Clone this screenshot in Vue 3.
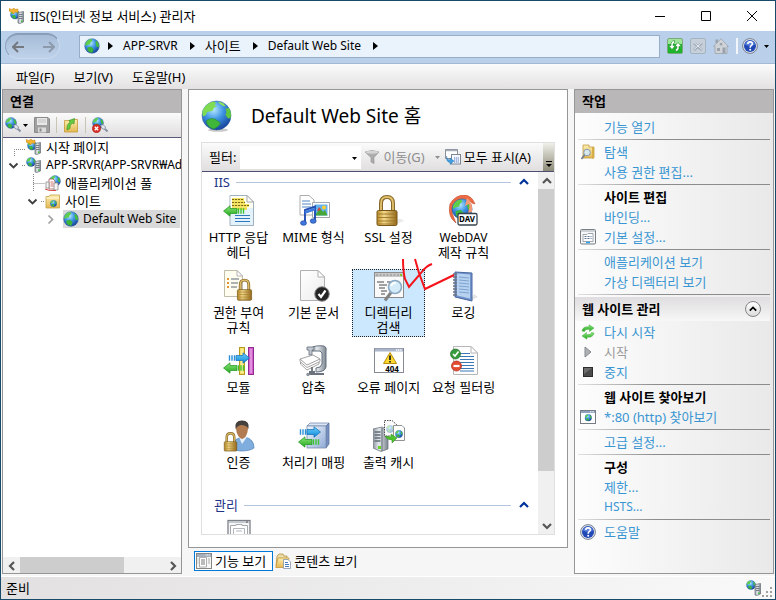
<template>
  <div class="window">
    <!-- Icon sprite -->
    <svg class="sprite" aria-hidden="true">
      <defs>
        <radialGradient id="gBall" cx="0.4" cy="0.3" r="0.75">
          <stop offset="0" stop-color="#b5e8ff" />
          <stop offset="0.45" stop-color="#3f95e4" />
          <stop offset="1" stop-color="#123a94" />
        </radialGradient>
        <linearGradient id="gGold" x1="0" x2="1">
          <stop offset="0" stop-color="#b88a26" />
          <stop offset="0.35" stop-color="#f4db8c" />
          <stop offset="1" stop-color="#94691a" />
        </linearGradient>
        <linearGradient id="gSteel" x1="0" x2="1">
          <stop offset="0" stop-color="#8f979f" />
          <stop offset="0.4" stop-color="#e6eaee" />
          <stop offset="1" stop-color="#7b848d" />
        </linearGradient>
        <linearGradient id="gPage" x1="0" y1="0" x2="1" y2="1">
          <stop offset="0" stop-color="#ffffff" />
          <stop offset="1" stop-color="#ececec" />
        </linearGradient>
        <linearGradient id="gFolder" x1="0" y1="0" x2="0" y2="1">
          <stop offset="0" stop-color="#fdeeb0" />
          <stop offset="1" stop-color="#e3b954" />
        </linearGradient>
        <linearGradient id="gGreen" x1="0" y1="0" x2="0" y2="1">
          <stop offset="0" stop-color="#8ce67c" />
          <stop offset="1" stop-color="#22a81c" />
        </linearGradient>
        <linearGradient id="gBlue" x1="0" y1="0" x2="0" y2="1">
          <stop offset="0" stop-color="#6fd0fb" />
          <stop offset="1" stop-color="#0b86d8" />
        </linearGradient>
        <linearGradient id="gBox" x1="0" y1="0" x2="1" y2="1">
          <stop offset="0" stop-color="#f2f7fd" />
          <stop offset="1" stop-color="#8ea9d6" />
        </linearGradient>
      </defs>

      <symbol id="globe" viewBox="0 0 16 16">
        <circle cx="8" cy="8" r="7.3" fill="url(#gBall)" stroke="#2b5e9c" stroke-width=".5" />
        <path d="M2 4.500Q4 1.200 7.500 1L8.300 2.800L6.500 4.200L6 6.200L3.600 6.800L1.400 8Q1 6 2 4.500Z" fill="#5fce4a" />
        <path d="M3.500 9.500L7 8.800L9.600 11L8.500 14.600Q5.500 15 3.500 12.500Z" fill="#3db53b" />
        <path d="M11.500 3L13.500 3.500Q15.500 6.500 14.700 9.500L12.500 8.500L11.800 6Z" fill="#46bd3e" />
      </symbol>
      <symbol id="globe-large" viewBox="0 0 32 32">
        <ellipse cx="17" cy="30" rx="10" ry="1.800" fill="#c9c9c9" />
        <circle cx="15.500" cy="15.500" r="14.500" fill="url(#gBall)" stroke="#2b5e9c" stroke-width=".5" />
        <path d="M2.500 9Q6 2.500 13 1.500L15 3L13.500 5L15.500 6.500L12.500 8L12 10.500L8.500 11.500L6 12L5 15L2 16.500Q.5 12 2.500 9Z" fill="#7fdc52" />
        <path d="M5.500 20.500L9.500 18.500L14 19L19.500 23L17.500 26L13 29Q8 28 6 24Z" fill="#3fb63a" stroke="#2a8a39" stroke-width=".6" />
        <path d="M17 1.500L22 3L25 6.500L22 6L19 4Z" fill="#8fe05c" />
        <path d="M24.500 8.500L28 8Q31 13 29.500 18L27 18.500L24.500 15L25.500 12Z" fill="#5fc644" />
      </symbol>
      <symbol id="server" viewBox="0 0 16 16">
        <path d="M9 4.500L14.500 3.500V14L11 15.500L9 15Z" fill="url(#gSteel)" stroke="#68717a" stroke-width=".7" />
        <path d="M10 6.500H13.500M10 8.500H13.500M10 10.500H13.500" stroke="#5f6870" stroke-width=".8" />
        <rect x="12" y="12.500" width="1.500" height="1.500" fill="#39c934" />
      </symbol>
      <symbol id="web-server" viewBox="0 0 16 16">
        <use href="#globe" x="0" y="0" width="10" height="10" />
        <use href="#server" width="16" height="16" />
      </symbol>
      <symbol id="start-page" viewBox="0 0 16 16">
        <use href="#globe" x="1" y="1" width="10" height="11" />
        <path d="M0 3V.5L3 1.500L5 0L6 1.500L9 1V4.500L6 4L4.500 6L3.500 4.500Z" fill="#f5b52e" stroke="#c77e12" stroke-width=".5" />
        <use href="#server" width="16" height="16" />
      </symbol>
      <symbol id="connect" viewBox="0 0 16 16">
        <use href="#globe" width="12" height="12" />
        <path d="M8.500 8.500L11 7.500L13.500 10L12.500 12.500L10 11.500Z" fill="#dfe4ec" stroke="#78869c" stroke-width=".8" />
        <path d="M13 12L15.500 14.500" stroke="#8490a3" stroke-width="2" />
      </symbol>
      <symbol id="disconnect" viewBox="0 0 16 16">
        <use href="#connect" width="16" height="16" />
        <circle cx="4.500" cy="11.500" r="4.200" fill="#d82e25" stroke="#9d140e" stroke-width=".5" />
        <path d="M2.800 9.800L6.200 13.200M6.200 9.800L2.800 13.200" stroke="#fff" stroke-width="1.400" />
      </symbol>
      <symbol id="save" viewBox="0 0 16 16">
        <path d="M.5.5H14L15.500 2V15.500H.5Z" fill="#a0a0a0" stroke="#8a8a8a" />
        <rect x="3" y="1" width="10" height="7" fill="#e8e8e8" />
        <path d="M4 3H12M4 5H12" stroke="#c2c2c2" />
        <rect x="4" y="10.500" width="8" height="5" fill="#dcdcdc" />
        <rect x="5.500" y="11.500" width="2" height="3" fill="#8a8a8a" />
      </symbol>
      <symbol id="folder-up" viewBox="0 0 16 16">
        <path d="M1.500 3.500H9L10.500 2.500H14.500V15H1.500Z" fill="url(#gFolder)" stroke="#c59a35" stroke-width=".8" />
        <path d="M4 13Q3.500 7 7 5.500L6 3.500L11.500 1.500L11 7L9.500 6Q6.500 8 7 11.500Z" fill="#66c93f" stroke="#34922a" stroke-width=".6" />
      </symbol>
      <symbol id="pool" viewBox="0 0 16 16">
        <use href="#globe" x="4" width="12" height="12" />
        <path d="M4 4H8L10 6V14H4Z" fill="#fff" stroke="#a25858" stroke-width=".8" />
        <path d="M1 7H4V13H1ZM9 8H13V15H9Z" fill="#f6f6f6" stroke="#8b8b8b" stroke-width=".8" />
        <path d="M5.500 7H8.500M5.500 9H8.500M5.500 11H8.500" stroke="#c04b46" stroke-width=".8" />
        <path d="M0 14Q5 16.500 11 15.500" fill="none" stroke="#d3423b" />
      </symbol>
      <symbol id="site-folder" viewBox="0 0 16 16">
        <path d="M1 3.500H4L5 2H14.500V15H1Z" fill="url(#gFolder)" stroke="#c7a247" stroke-width=".8" />
        <path d="M1.500 5H14" stroke="#fff8d8" />
        <use href="#globe" x="5" y="7" width="7" height="7" />
      </symbol>
      <symbol id="refresh" viewBox="0 0 16 16">
        <rect x=".5" y=".5" width="15" height="15" rx="1.500" fill="#9fe49b" stroke="#7da77e" />
        <rect x="1" y="6" width="14" height="9" fill="#1fb52a" />
        <path d="M7.500 2.500Q3.500 3 4 7.500H1.500L5 11.500L8.500 7.500H6Q5.800 5 7.500 5Z M8.500 13.500Q12.500 13 12 8.500H14.500L11 4.500L7.500 8.500H10Q10.200 11 8.500 11Z" fill="#fff" stroke="#188b25" stroke-width=".6" />
      </symbol>
      <symbol id="cancel" viewBox="0 0 16 16">
        <rect x=".5" y=".5" width="15" height="15" rx="1.500" fill="#c6d0db" stroke="#a6b2c0" />
        <path d="M4 5L12 12M12 5L4 12" stroke="#9ea9b5" stroke-width="2.600" />
        <path d="M4 4.500L12 11.500M12 4.500L4 11.500" stroke="#e9eef4" />
      </symbol>
      <symbol id="home" viewBox="0 0 16 16">
        <path d="M2.500 1.500H5V5H2.500Z" fill="#9ba2aa" />
        <path d="M8 .8L15.500 8.500H14V15.500H2V8.500H.5Z" fill="#cfd3d8" stroke="#a2a9b1" stroke-width=".9" />
        <path d="M4 10H7V13H4ZM9.500 9.500H12.500V15.500H9.500Z" fill="#9aa3ac" />
        <rect x="6.800" y="5" width="2.400" height="2.400" fill="#9aa3ac" />
      </symbol>
      <symbol id="help" viewBox="0 0 16 16">
        <circle cx="8" cy="8" r="7.400" fill="#e1e5ef" stroke="#77808f" />
        <circle cx="8" cy="8" r="6" fill="#2149b5" />
        <path d="M3 6.500A5.200 5.200 0 0 1 13 6.500Q8 9 3 6.500Z" fill="#5c83dd" />
        <path d="M5.800 6Q6 3.800 8.200 3.900Q10.600 4.100 10.300 6.100Q10 7.200 8.900 7.900Q8.200 8.400 8.200 9.700" fill="none" stroke="#fff" stroke-width="1.600" />
        <circle cx="8.200" cy="11.800" r="1" fill="#fff" />
      </symbol>
      <symbol id="funnel" viewBox="0 0 16 16">
        <path d="M1 3Q8 0 15 3L10 8.500V14.500L7 13V8.500Z" fill="#adadad" stroke="#8f8f8f" stroke-width=".6" />
        <ellipse cx="8" cy="3.200" rx="6.500" ry="1.500" fill="#d5d5d5" />
      </symbol>
      <symbol id="show-all" viewBox="0 0 16 16">
        <path d="M.5.5H12.500V9.500H.5Z" fill="#fff" stroke="#8a8f98" />
        <path d="M1 1.500H12" stroke="#a9afb9" stroke-width="1.500" />
        <rect x="6.500" y="5.500" width="9" height="9.500" fill="#f4f7fc" stroke="#7e8694" />
        <path d="M9 9H14M9 11H14M9 13H14" stroke="#4a70c2" stroke-dasharray="1.300 .8" />
        <path d="M1.500 7Q1.500 11 5 11V9L9 12L5 15.500V13.500Q1 13 1.500 7Z" fill="#3f9fe0" stroke="#216aa8" stroke-width=".4" />
      </symbol>
      <symbol id="explore" viewBox="0 0 16 16">
        <path d="M3 1H9V3H14V14H3Z" fill="url(#gFolder)" stroke="#c39b3f" stroke-width=".8" />
        <path d="M12 3H14V14L12 15Z" fill="#d6ad47" />
        <circle cx="7" cy="8.500" r="3.300" fill="#d4ebfa" fill-opacity=".9" stroke="#8799ad" />
        <path d="M4.500 11L1.500 15" stroke="#76828f" stroke-width="1.800" />
      </symbol>
      <symbol id="settings" viewBox="0 0 16 16">
        <rect x=".5" y=".5" width="15" height="14.500" rx="1" fill="#f6f6f6" stroke="#797e84" />
        <path d="M1 2H15" stroke="#a6acb3" />
        <path d="M3 5.500H7L8 4.500H13V12.500H3Z" fill="#fff" stroke="#8c939c" stroke-width=".8" />
        <path d="M4.500 7.500H11.500M4.500 9.500H11.500" stroke="#5f7391" stroke-dasharray="2 1" />
        <path d="M6 13.500H10" stroke="#2aa3ec" stroke-width="1.500" />
      </symbol>
      <symbol id="restart" viewBox="0 0 16 16">
        <path d="M2 7Q3 2 9 3V.8L14 4L9.500 7.500V5.300Q5 5 4.500 7.500Z" fill="url(#gGreen)" stroke="#48a844" stroke-width=".5" />
        <path d="M14 9Q13 14 7 13V15.200L2 12L6.500 8.500V10.700Q11 11 11.500 8.500Z" fill="url(#gGreen)" stroke="#48a844" stroke-width=".5" />
      </symbol>
      <symbol id="play" viewBox="0 0 16 16">
        <path d="M5 3L11 8L5 13Z" fill="#aeb1b4" stroke="#85898d" />
      </symbol>
      <symbol id="stop" viewBox="0 0 16 16">
        <rect x="3.500" y="3.500" width="9" height="9" fill="#4b4b4b" stroke="#2c2c2c" />
        <path d="M4 4H12L4 10Z" fill="#6e6e6e" />
      </symbol>
      <symbol id="browse" viewBox="0 0 16 16">
        <rect x=".5" y="1.500" width="15" height="13" fill="#fff" stroke="#757c85" />
        <path d="M1 3H15" stroke="#8fa2bd" stroke-width="2" />
        <path d="M10 2.800H14" stroke="#fff" stroke-dasharray="1 .6" />
        <use href="#globe" x="4.500" y="5" width="7.500" height="7.500" />
      </symbol>
      <symbol id="features" viewBox="0 0 16 16">
        <rect x=".5" y=".5" width="15" height="15" fill="#f6f6f4" stroke="#858585" />
        <path d="M1 2.500H15" stroke="#a5b0be" stroke-width="3" />
        <path d="M9.500 2H14" stroke="#fff" stroke-dasharray="1 .7" />
        <path d="M3.500 4.500H10.500V14H3.500Z" fill="#fff" stroke="#9b9b9b" stroke-width=".8" />
        <path d="M5 7H9M5 9H9M5 11H9" stroke="#767676" />
        <path d="M12 6H14M12 8H14M12 10H14M1.500 6H2.500M1.500 8H2.500M1.500 10H2.500" stroke="#adadad" />
      </symbol>
      <symbol id="contents" viewBox="0 0 16 16">
        <path d="M2 3L4 1H8L9 3H12V13H1Z" fill="#eadba9" stroke="#b49443" stroke-width=".8" />
        <path d="M3 5H14L12 14.500H.8Z" fill="url(#gFolder)" stroke="#c4973a" stroke-width=".8" />
        <path d="M8.500 6.500H13L15.500 9V15.500H8.500Z" fill="#fff" stroke="#8394aa" stroke-width=".8" />
        <path d="M10 9.500H13M10 11.500H14M10 13.500H14" stroke="#4678bd" />
      </symbol>

      <!-- 32px feature icons -->
      <symbol id="arrow-left" viewBox="0 0 22 12">
        <path d="M.5 6L7 .8V3.500H14V8.500H7V11.200Z" fill="url(#gGreen)" stroke="#1f9420" stroke-width=".7" />
        <path d="M15.500 3.200V8.800M18 3.200V8.800M20.500 3.200V8.800" stroke="#3ec335" stroke-width="1.400" />
      </symbol>
      <symbol id="arrow-right" viewBox="0 0 22 12">
        <path d="M21.500 6L15 .8V3.500H8V8.500H15V11.200Z" fill="url(#gBlue)" stroke="#0f6cb4" stroke-width=".7" />
        <path d="M1.500 3.200V8.800M4 3.200V8.800M6.500 3.200V8.800" stroke="#2c8fd6" stroke-width="1.400" />
      </symbol>
      <symbol id="lock" viewBox="0 0 24 32">
        <path d="M6 17V8.500Q6 2 12 2T18 8.500V17" fill="none" stroke="#86672a" stroke-width="4" />
        <path d="M6 17V8.500Q6 2 12 2T18 8.500V17" fill="none" stroke="#e2c26c" stroke-width="1.800" />
        <rect x="2" y="15.500" width="20" height="15" rx="1.500" fill="url(#gGold)" stroke="#79571a" />
        <path d="M3 19H21M3 22.500H21M3 26H21M3 29H21" stroke="#9d7527" stroke-width=".9" />
      </symbol>
      <symbol id="http-headers" viewBox="0 0 32 32">
        <path d="M7 .5H24L30.500 7V30.500H7Z" fill="#e4f2fb" stroke="#9fb0be" />
        <path d="M7.500 1H23.500L30 7V13H7.500Z" fill="#fffef2" />
        <path d="M24 .5V7H30.500Z" fill="#fff" stroke="#a5a5a5" />
        <path d="M9 4.500H21M9 7.500H22M9 10.500H26M9 13.500H24" stroke="#f0da3c" stroke-width="2.400" />
        <path d="M9 4.500H21M9 7.500H22M9 10.500H26" stroke="#6c5d13" stroke-width=".9" stroke-dasharray="2 1" />
        <path d="M12 20.500H27M12 23.500H27M12 26.500H27" stroke="#2e78bd" stroke-width="1.100" />
        <use href="#arrow-left" x="0" y="10" width="22" height="12" />
      </symbol>
      <symbol id="mime" viewBox="0 0 32 32">
        <path d="M2 .5H11L16 5V20H2Z" fill="#fff" stroke="#acacac" />
        <path d="M4 6H12M4 9H13M4 12H13" stroke="#5387c6" />
        <path d="M14.500 7.500H31.500V22.500H14.500Z" fill="#fff" stroke="#a0a7b0" />
        <rect x="16.500" y="9.500" width="13" height="11" fill="#65b3ee" />
        <path d="M17 20.500L22 13L25 17L27 15L29.500 20.500Z" fill="#48a638" />
        <circle cx="26" cy="12.500" r="2" fill="#ffd02e" />
        <path d="M19 16L21 12L23 15Z" fill="#d94438" />
        <path d="M7 27V15L17 11.500V25" fill="none" stroke="#224fb6" stroke-width="1.900" />
        <path d="M7 17.500L17 14" stroke="#3f7be0" stroke-width="2.500" />
        <ellipse cx="5.500" cy="28" rx="3" ry="2.300" fill="#3f78dd" stroke="#1c4193" stroke-width=".6" />
        <ellipse cx="15.200" cy="26" rx="3" ry="2.300" fill="#3f78dd" stroke="#1c4193" stroke-width=".6" />
      </symbol>
      <symbol id="ssl" viewBox="0 0 32 32">
        <path d="M21 30L31 26Q29 23 25 24Z" fill="#ececec" />
        <use href="#lock" x="2" width="24" height="32" />
      </symbol>
      <symbol id="webdav" viewBox="0 0 32 32">
        <path d="M4 24Q0 18 2 9Q7 0 17 0Q24 1 27 9L24 8Q20 3 13 4Q5 8 4 18L8 28Z" fill="#ef6a43" stroke="#bd4325" stroke-width=".6" />
        <use href="#globe" x="3" y="3" width="22" height="22" />
        <path d="M19 3Q25 7 24 17L20 18Q22 12 21 9L17 11Z" fill="#f39a76" />
        <rect x="10" y="18.500" width="19" height="11.500" rx="1.500" fill="#fff" stroke="#34434f" stroke-width="1.300" />
      </symbol>
      <symbol id="authz" viewBox="0 0 32 32">
        <path d="M1.500.5H14L19.500 6V26.500H1.500Z" fill="#fffdf0" stroke="#c0bda9" />
        <path d="M14 .5V6H19.500Z" fill="#fff" stroke="#b4b4b4" />
        <path d="M4 9H6M4 13H6M4 17H6" stroke="#e29730" stroke-width="2" />
        <path d="M8 9H16M8 13H15M8 17H14" stroke="#5d6877" stroke-width="1.200" />
        <use href="#lock" x="13" y="8" width="17" height="24" />
      </symbol>
      <symbol id="default-doc" viewBox="0 0 32 32">
        <path d="M2.500.5H20L26.500 7V30.500H2.500Z" fill="url(#gPage)" stroke="#b0b0b0" />
        <path d="M20 .5V7H26.500Z" fill="#fff" stroke="#b0b0b0" />
        <circle cx="24" cy="24" r="7.300" fill="#252525" stroke="#929292" />
        <path d="M20.500 24L23 27L27.500 20.500" fill="none" stroke="#fff" stroke-width="2.200" />
      </symbol>
      <symbol id="dir-browse" viewBox="0 0 32 32">
        <rect x="1.500" y="2.500" width="29" height="25" fill="#fafafa" stroke="#8c8c8c" />
        <path d="M2 5H30" stroke="#c7c7c7" stroke-width="4" />
        <path d="M3 5H26" stroke="#8b8b8b" stroke-dasharray="2 1.500" />
        <rect x="27" y="4" width="2" height="2" fill="#7fc62d" />
        <path d="M4 12H11M6 15H14M6 18H12M8 21H14M8 24H12M14 12H19" stroke="#484848" stroke-width="1.200" />
        <path d="M18 22.500L12 30.500" stroke="#838383" stroke-width="3" />
        <circle cx="22" cy="17" r="6.500" fill="#d4ecfa" stroke="#8ba9c3" stroke-width="1.600" />
        <path d="M18 16Q19 12.500 23 13" fill="none" stroke="#fff" stroke-width="2" />
      </symbol>
      <symbol id="logging" viewBox="0 0 32 32">
        <path d="M22 31L30 27L26 24Z" fill="#e5e5e5" />
        <path d="M7 2L24 3V31L7 27Z" fill="#6f93ca" stroke="#4a67a0" />
        <path d="M9 3.500L22 4.500V28.500L9 25.500Z" fill="#b7d2f0" />
        <path d="M11 7L21 8M11 10L21 11M11 13L21 14M11 16L21 17M11 19L21 20M11 22L21 23" stroke="#7da2cf" />
        <path d="M5 4H9M5 7H9M5 10H9M5 13H9M5 16H9M5 19H9M5 22H9M5 25H9" stroke="#6c7480" stroke-width="1.400" />
      </symbol>
      <symbol id="modules" viewBox="0 0 32 32">
        <rect x="16.500" y="2.500" width="5" height="27" fill="#f6e26a" stroke="#b59a1e" />
        <rect x="25.500" y="2.500" width="5" height="27" fill="#d460cd" stroke="#8f2b91" />
        <path d="M19 4V28M28 4V28" stroke="#fff" stroke-opacity=".6" />
        <use href="#arrow-right" x="5" y="7" width="22" height="12" />
        <use href="#arrow-left" x="0" y="17" width="22" height="12" />
      </symbol>
      <symbol id="compress" viewBox="0 0 32 32">
        <path d="M13 3Q17 0 26 1Q29 2 28 6V22Q27 27 18 27V23Q23 23 24 19V8Q23 5 18 6H13Z" fill="url(#gSteel)" stroke="#64707f" />
        <path d="M9 2H16V5H14V10H11V5H9Z" fill="#c1c8d1" stroke="#646e7a" stroke-width=".8" />
        <path d="M2 14L15 10L22 14L9 20Z" fill="#fff" stroke="#8a8a8a" stroke-width=".8" />
        <path d="M2 14V16.500L9 22.500L22 16.500V14M2.500 17V19L9 25L21 19V17" fill="none" stroke="#9a9a9a" stroke-width=".9" />
        <path d="M14 22V28M9 29H26M11 27H17" stroke="#6b727b" stroke-width="1.800" />
        <circle cx="10" cy="29.500" r="1.700" fill="#8c939b" />
      </symbol>
      <symbol id="error-pages" viewBox="0 0 32 32">
        <rect x="1.500" y="3.500" width="29" height="24" fill="#fff" stroke="#858b94" />
        <path d="M2 5H30" stroke="#aab5cb" stroke-width="3" />
        <path d="M23 5H29" stroke="#fff" stroke-width="1.500" stroke-dasharray="1.300 .8" />
        <path d="M17 7.500L23.500 18.500H10.500Z" fill="#ffd92e" stroke="#bb8b0a" stroke-linejoin="round" />
        <path d="M17 10.500V15M17 16V17.500" stroke="#222" stroke-width="1.800" />
      </symbol>
      <symbol id="req-filter" viewBox="0 0 32 32">
        <path d="M5.500 1.500H23L29.500 8V29.500H5.500Z" fill="#fdfdfd" stroke="#b6b6b6" />
        <path d="M23 1.500V8H29.500Z" fill="#fff" stroke="#b6b6b6" />
        <path d="M12 8.500H22M12 11.500H26M12 14.500H26M12 17.500H26M12 20.500H26M12 23.500H26M12 26H26" stroke="#3c78b6" stroke-width="1.100" />
        <circle cx="7.500" cy="9" r="5" fill="#389c3c" stroke="#246a29" stroke-width=".7" />
        <path d="M5 9L7 11L10.500 6.500" fill="none" stroke="#fff" stroke-width="1.600" />
        <circle cx="8.500" cy="21" r="5" fill="#e44c31" stroke="#a62c18" stroke-width=".7" />
        <path d="M5.500 21H11.500" stroke="#fff" stroke-width="2.200" />
      </symbol>
      <symbol id="auth" viewBox="0 0 32 32">
        <path d="M10 30Q9 20 16 18L22 17Q31 19 31 28Q27 31 18 31Z" fill="#7faede" stroke="#4d7fb5" stroke-width=".7" />
        <path d="M16 17L19 24L24 17Z" fill="#e8f1fa" />
        <path d="M13 9Q12 1 19 .8Q26 1 25 9Q24 18 19 19Q14 17 13 9Z" fill="#b27c50" />
        <path d="M12.500 9Q11 .5 19 .5Q27 .5 25.500 9Q24 5.500 19 5Q15 5 12.500 9Z" fill="#43403e" />
        <use href="#lock" x="0" y="12" width="15" height="20" />
      </symbol>
      <symbol id="handlers" viewBox="0 0 32 32">
        <path d="M9 6L12 3H31L28 6Z" fill="#dbe7f6" stroke="#7a8eae" stroke-width=".8" />
        <path d="M31 3V24L28 28V6Z" fill="#7590c0" stroke="#5a73a1" stroke-width=".8" />
        <rect x="9" y="6" width="19" height="22" fill="url(#gBox)" stroke="#7a8eae" stroke-width=".8" />
        <use href="#arrow-right" x="1" y="6" width="22" height="12" />
        <use href="#arrow-left" x="0" y="16" width="22" height="12" />
      </symbol>
      <symbol id="output-cache" viewBox="0 0 32 32">
        <path d="M0 9L9 7L15 10V29L8 31.500L0 28Z" fill="url(#gSteel)" stroke="#6f7880" stroke-width=".8" />
        <path d="M9 8V31" stroke="#636d76" />
        <path d="M1.500 12H7.500M1.500 15H7.500M1.500 18H7.500M1.500 21H7.500" stroke="#626d76" stroke-width="1.400" />
        <rect x="5" y="26" width="3" height="3" fill="#69d52a" />
        <path d="M11.500 15.500V.5H19L24 5V16H11.500" fill="#fbfbfb" stroke="#505050" stroke-dasharray="1.500 1" />
        <use href="#globe" x="13" y="5" width="8" height="8" opacity=".4" />
        <path d="M20.500 5.500H29L31.500 8V20.500H20.500Z" fill="#fff" stroke="#929292" />
        <use href="#globe" x="22" y="10" width="8" height="8" />
        <path d="M12 16L18 17V14L24 18L19 23V20Q14 20 12 16Z" fill="#50c42b" stroke="#2c8b1c" stroke-width=".5" />
      </symbol>
      <symbol id="config-editor" viewBox="0 0 32 32">
        <rect x="5" y="2.500" width="22" height="26" fill="#f6f6f6" stroke="#7b8087" stroke-width="1.300" />
        <path d="M6 4H26" stroke="#c3c8ce" stroke-width="2" />
        <path d="M23 4H25" stroke="#555" />
        <path d="M7.500 7.500H13V6.500H19V7.500H24.500V26H7.500Z" fill="#fff" stroke="#a4a9af" />
        <path d="M10.500 10.500H21.500V24H10.500ZM13 13H19" fill="none" stroke="#b3b8bd" />
      </symbol>

      <symbol id="dropdown" viewBox="0 0 7 4"><path d="M0 0H7L3.500 4Z" fill="currentColor" /></symbol>
      <symbol id="crumb-arrow" viewBox="0 0 5 8"><path d="M0 0L5 4L0 8Z" fill="currentColor" /></symbol>
      <symbol id="chevron" viewBox="0 0 10 10"><path d="M1 7L5 3L9 7" fill="none" stroke="currentColor" stroke-width="2.200" /></symbol>

      <!-- Tree expanders, 19 x 18 each -->
      <symbol id="tree-first" viewBox="0 0 19 18"><path d="M7.500 18V11.500H19" fill="none" stroke="#888" stroke-dasharray="1 1" /></symbol>
      <symbol id="tree-leaf" viewBox="0 0 19 18"><path d="M7.500 0V18M7.500 9.500H19" fill="none" stroke="#888" stroke-dasharray="1 1" /></symbol>
      <symbol id="tree-open" viewBox="0 0 19 18">
        <path d="M2.500 7.500L6.500 11.500L10.500 7.500" fill="none" stroke="#404040" stroke-width="1.900" />
        <path d="M15 9.500H19" stroke="#888" stroke-dasharray="1 1" />
      </symbol>
      <symbol id="tree-closed" viewBox="0 0 19 18"><path d="M4.500 5.500L8.500 9.500L4.500 13.500" fill="none" stroke="#a0a0a0" stroke-width="1.700" /></symbol>
    </svg>

    <header class="titlebar">
      <svg class="icon16"><use href="#start-page" /></svg>
      <span class="title">IIS(인터넷 정보 서비스) 관리자</span>
      <button class="win-btn" aria-label="최소화">
        <svg viewBox="0 0 10 10"><path d="M0 5.500H10" /></svg>
      </button>
      <button class="win-btn" aria-label="최대화">
        <svg viewBox="0 0 10 10"><path d="M.5.5H9.500V9.500H.5Z" /></svg>
      </button>
      <button class="win-btn" aria-label="닫기">
        <svg viewBox="0 0 10 10"><path d="M0 0L10 10M10 0L0 10" /></svg>
      </button>
    </header>

    <nav class="navbar">
      <div class="history">
        <button aria-label="뒤로">
          <svg viewBox="0 0 12 12"><path d="M12 6H1.500M6 1L1 6L6 11" /></svg>
        </button>
        <button class="forward" aria-label="앞으로">
          <svg viewBox="0 0 12 12"><path d="M0 6H10.500M6 1L11 6L6 11" /></svg>
        </button>
      </div>
      <div class="address">
        <svg class="icon16"><use href="#globe" /></svg>
        <template v-for="crumb in crumbs" :key="crumb">
          <svg class="crumb-arrow"><use href="#crumb-arrow" /></svg>
          <a href="#" :class="textClass(crumb)">{{ crumb }}</a>
        </template>
        <svg class="crumb-arrow"><use href="#crumb-arrow" /></svg>
      </div>
      <div class="nav-tools">
        <button aria-label="새로 고침"><svg class="icon16"><use href="#refresh" /></svg></button>
        <button aria-label="취소" disabled><svg class="icon16"><use href="#cancel" /></svg></button>
        <button aria-label="홈" disabled><svg class="icon16"><use href="#home" /></svg></button>
        <button class="help-btn" aria-label="도움말">
          <svg class="icon16"><use href="#help" /></svg>
          <svg class="dropdown small"><use href="#dropdown" /></svg>
        </button>
      </div>
    </nav>

    <div class="menubar">
      <button v-for="menu in menus" :key="menu">{{ menu }}</button>
    </div>

    <main class="panes">
      <!-- Connections -->
      <section class="pane connections">
        <h2 class="pane-title">연결</h2>
        <div class="conn-tools">
          <button class="connect-btn" aria-label="연결 만들기">
            <svg class="icon16"><use href="#connect" /></svg>
            <svg class="dropdown small"><use href="#dropdown" /></svg>
          </button>
          <button aria-label="저장" disabled><svg class="icon16"><use href="#save" /></svg></button>
          <span class="divider"></span>
          <button aria-label="위로"><svg class="icon16"><use href="#folder-up" /></svg></button>
          <span class="divider"></span>
          <button aria-label="연결 끊기"><svg class="icon16"><use href="#disconnect" /></svg></button>
        </div>
        <ul class="tree">
          <li
            v-for="node in tree"
            :key="node.label"
            :class="['level-' + node.level, { selected: node.label === selectedNode }]"
            @click="selectedNode = node.label"
          >
            <svg class="expander"><use :href="'#tree-' + node.state" /></svg>
            <span class="node">
              <svg class="icon16"><use :href="'#' + node.icon" /></svg>
              <span :class="textClass(node.label)">{{ node.label }}</span>
            </span>
          </li>
        </ul>
        <div class="scrollbar horizontal">
          <button class="to-left" aria-label="왼쪽"><svg class="chevron"><use href="#chevron" /></svg></button>
          <div class="track"><div class="thumb"></div></div>
          <button class="to-right" aria-label="오른쪽"><svg class="chevron"><use href="#chevron" /></svg></button>
        </div>
      </section>

      <!-- Features -->
      <section class="center">
        <div class="pane home">
          <h1 class="home-title">
            <svg class="icon32"><use href="#globe-large" /></svg>
            Default Web Site 홈
          </h1>
          <div class="feature-box">
            <div class="filter-bar">
              <label for="filter">필터:</label>
              <div class="combo">
                <select id="filter" v-model="filter">
                  <option value=""></option>
                </select>
                <svg class="dropdown small"><use href="#dropdown" /></svg>
              </div>
              <button class="go" disabled>
                <svg class="icon16"><use href="#funnel" /></svg>
                <span>이동(G)</span>
                <svg class="dropdown small"><use href="#dropdown" /></svg>
              </button>
              <button class="show-all">
                <svg class="icon16"><use href="#show-all" /></svg>
                <span>모두 표시(A)</span>
              </button>
              <button class="overflow" aria-label="도구 모음 옵션">
                <svg viewBox="0 0 6 7"><path d="M0 0H6V1H0ZM0 3H6L3 6Z" fill="#000" /></svg>
              </button>
            </div>
            <div class="feature-scroll">
              <div class="feature-list">
                <section v-for="group in groups" :key="group.name" class="group">
                  <h3>
                    <span>{{ group.name }}</span>
                    <i></i>
                    <svg class="chevron"><use href="#chevron" /></svg>
                  </h3>
                  <div class="grid">
                    <button
                      v-for="item in group.items"
                      :key="item.icon"
                      :class="['feature', { active: item.icon === selectedFeature }]"
                      @click="selectedFeature = item.icon"
                    >
                      <svg class="icon32"><use :href="'#' + item.icon" /></svg>
                      <span v-if="item.badge" class="badge">{{ item.badge }}</span>
                      <span v-for="line in item.lines" :key="line" :class="textClass(line)">{{ line }}</span>
                      <svg v-if="item.marked" class="mark" viewBox="0 0 56 36">
                        <path d="M3 2Q3 14 5 22L9 30L21 16Q26 9 32 7M15 2L19 16L25 32L54 18" />
                      </svg>
                    </button>
                  </div>
                </section>
              </div>
              <div class="scrollbar vertical">
                <button class="to-top" aria-label="위"><svg class="chevron"><use href="#chevron" /></svg></button>
                <div class="track"><div class="thumb"></div></div>
                <button class="to-bottom" aria-label="아래"><svg class="chevron"><use href="#chevron" /></svg></button>
              </div>
            </div>
          </div>
        </div>
        <div class="view-tabs">
          <button
            v-for="tab in tabs"
            :key="tab.label"
            :class="{ active: tab.label === activeTab }"
            @click="activeTab = tab.label"
          >
            <svg class="icon16"><use :href="'#' + tab.icon" /></svg>
            <span>{{ tab.label }}</span>
          </button>
        </div>
      </section>

      <!-- Actions -->
      <aside class="pane actions">
        <h2 class="pane-title">작업</h2>
        <div class="action-list">
          <template v-for="(block, i) in actionBlocks" :key="i">
            <hr v-if="i > 0" />
            <template v-for="row in block" :key="row.text">
              <h3 v-if="row.type === 'section'" class="section-title">
                {{ row.text }}
                <button aria-label="접기"><svg class="chevron"><use href="#chevron" /></svg></button>
              </h3>
              <h4 v-else-if="row.type === 'title'">{{ row.text }}</h4>
              <div v-else class="action">
                <span class="action-icon">
                  <svg v-if="row.icon" class="icon16"><use :href="'#' + row.icon" /></svg>
                </span>
                <span v-if="row.disabled" class="disabled">{{ row.text }}</span>
                <a v-else href="#" :class="textClass(row.text)">{{ row.text }}</a>
              </div>
            </template>
          </template>
        </div>
      </aside>
    </main>

    <footer class="statusbar">
      <span>준비</span>
      <svg class="icon16"><use href="#web-server" /></svg>
      <svg class="grip" viewBox="0 0 12 12">
        <path d="M8 0H10V2H8ZM4 4H6V6H4ZM8 4H10V6H8ZM0 8H2V10H0ZM4 8H6V10H4ZM8 8H10V10H8Z" />
      </svg>
    </footer>
  </div>
</template>

<script setup>
import { ref } from 'vue'

const crumbs = ['APP-SRVR', '사이트', 'Default Web Site']
const menus = ['파일(F)', '보기(V)', '도움말(H)']

const selectedNode = ref('Default Web Site')
const tree = [
  { label: '시작 페이지', icon: 'start-page', level: 0, state: 'first' },
  { label: 'APP-SRVR(APP-SRVR₩Ad', icon: 'web-server', level: 0, state: 'open' },
  { label: '애플리케이션 풀', icon: 'pool', level: 1, state: 'leaf' },
  { label: '사이트', icon: 'site-folder', level: 1, state: 'open' },
  { label: 'Default Web Site', icon: 'globe', level: 2, state: 'closed' }
]

const filter = ref('')
const selectedFeature = ref('dir-browse')
const groups = [
  {
    name: 'IIS',
    items: [
      { icon: 'http-headers', lines: ['HTTP 응답', '헤더'] },
      { icon: 'mime', lines: ['MIME 형식'] },
      { icon: 'ssl', lines: ['SSL 설정'] },
      { icon: 'webdav', lines: ['WebDAV', '제작 규칙'], badge: 'DAV' },
      { icon: 'authz', lines: ['권한 부여', '규칙'] },
      { icon: 'default-doc', lines: ['기본 문서'] },
      { icon: 'dir-browse', lines: ['디렉터리', '검색'], marked: true },
      { icon: 'logging', lines: ['로깅'] },
      { icon: 'modules', lines: ['모듈'] },
      { icon: 'compress', lines: ['압축'] },
      { icon: 'error-pages', lines: ['오류 페이지'], badge: '404' },
      { icon: 'req-filter', lines: ['요청 필터링'] },
      { icon: 'auth', lines: ['인증'] },
      { icon: 'handlers', lines: ['처리기 매핑'] },
      { icon: 'output-cache', lines: ['출력 캐시'] }
    ]
  },
  {
    name: '관리',
    items: [{ icon: 'config-editor', lines: [] }]
  }
]

const activeTab = ref('기능 보기')
const tabs = [
  { label: '기능 보기', icon: 'features' },
  { label: '콘텐츠 보기', icon: 'contents' }
]

// Blocks are divided by a rule
const actionBlocks = [
  [{ text: '기능 열기' }],
  [{ text: '탐색', icon: 'explore' }, { text: '사용 권한 편집...' }],
  [{ text: '사이트 편집', type: 'title' }, { text: '바인딩...' }, { text: '기본 설정...', icon: 'settings' }],
  [{ text: '애플리케이션 보기' }, { text: '가상 디렉터리 보기' }],
  [
    { text: '웹 사이트 관리', type: 'section' },
    { text: '다시 시작', icon: 'restart' },
    { text: '시작', icon: 'play', disabled: true },
    { text: '중지', icon: 'stop' }
  ],
  [{ text: '웹 사이트 찾아보기', type: 'title' }, { text: '*:80 (http) 찾아보기', icon: 'browse' }],
  [{ text: '고급 설정...' }],
  [{ text: '구성', type: 'title' }, { text: '제한...' }, { text: 'HSTS...' }],
  [{ text: '도움말', icon: 'help' }]
]

// Latin-only strings are set one size smaller than Hangul
const textClass = (text) => (/[가-힣]/.test(text) ? '' : 'latin')
</script>

<style>
html,
body {
  margin: 0;
}
</style>

<style scoped>
* {
  box-sizing: border-box;
}

.window {
  display: flex;
  flex-direction: column;
  height: 100vh;
  border: 1px solid #174a6b;
  background: #f6f6f6;
  color: #000;
  font-family: "Noto Sans", "Noto Sans CJK KR", sans-serif;
  font-size: 13px;
  line-height: 18px;
  overflow: hidden;
  white-space: nowrap;
}

.sprite {
  position: absolute;
  width: 0;
  height: 0;
}

button {
  margin: 0;
  padding: 0;
  border: 0;
  background: none;
  color: inherit;
  font: inherit;
}

h1, h2, h3, h4, ul {
  margin: 0;
  padding: 0;
  font-size: 13px;
  list-style: none;
}

svg {
  display: block;
  flex: none;
}

a {
  color: inherit;
  text-decoration: none;
}

.latin {
  font-size: 12px;
}

.icon16 {
  width: 16px;
  height: 16px;
}

.icon32 {
  width: 32px;
  height: 32px;
}

.chevron {
  width: 10px;
  height: 10px;
}

.dropdown {
  width: 7px;
  height: 4px;
}

.dropdown.small {
  width: 5px;
  height: 3px;
}

/* Title bar */
.titlebar {
  display: flex;
  align-items: center;
  flex: none;
  height: 30px;
  padding-left: 8px;
  background: #fff;
}

.title {
  flex: 1;
  margin-left: 5px;
}

.win-btn {
  display: flex;
  align-items: center;
  justify-content: center;
  width: 46px;
  height: 30px;
}

.win-btn svg {
  width: 10px;
  height: 10px;
  fill: none;
  stroke: #000;
}

/* Address row */
.navbar {
  display: flex;
  align-items: center;
  flex: none;
  height: 33px;
  padding: 0 6px 2px 4px;
  background: #b9cfea;
  border-bottom: 1px solid #a3b9d4;
}

.history {
  display: flex;
  align-items: center;
  justify-content: space-between;
  width: 55px;
  height: 26px;
  margin-right: 19px;
  padding: 0 4px 0 6px;
  border: 1px solid #c9d9ed;
  border-top: 2px solid #8a9db6;
  border-left-color: #8fa4bf;
  border-radius: 13px;
  background: linear-gradient(#a6bcd7, #bfd2ea);
}

.history svg {
  width: 12px;
  height: 12px;
  fill: none;
  stroke: #74797f;
  stroke-width: 2;
}

.history .forward svg {
  stroke: #8c9aab;
}

.address {
  display: flex;
  align-items: center;
  flex: 1;
  height: 23px;
  padding-left: 4px;
  border: 1px solid #96afc6;
  background: #eaf2fb;
}

.crumb-arrow {
  width: 5px;
  height: 8px;
  margin: 0 10px 0 12px;
}

.icon16 + .crumb-arrow {
  margin-left: 8px;
}

.nav-tools {
  display: flex;
  align-items: center;
  gap: 7px;
  margin-left: 7px;
}

.help-btn {
  display: flex;
  align-items: center;
  gap: 6px;
  padding-left: 4px;
  border-left: 2px solid #f2f5fa;
}

/* Menu */
.menubar {
  display: flex;
  flex: none;
  gap: 19px;
  height: 25px;
  padding-left: 15px;
  background: linear-gradient(#fbfbfb, #e3e1e2);
}

/* Panes */
.panes {
  display: grid;
  grid-template-columns: 180px minmax(0, 1fr) 200px;
  gap: 6px;
  flex: 1;
  min-height: 0;
  padding: 0 1px 2px;
}

.pane {
  display: flex;
  flex-direction: column;
  min-width: 0;
  min-height: 0;
  border: 1px solid #969696;
  background: #fff;
}

.pane-title {
  flex: none;
  height: 23px;
  padding-left: 7px;
  background: #bab7b9;
  line-height: 22px;
}

.conn-tools {
  display: flex;
  align-items: center;
  flex: none;
  gap: 6px;
  height: 25px;
  padding: 0 2px;
  border-bottom: 1px solid #565a78;
  background: linear-gradient(#fbfbfb, #e0dedf);
}

.connect-btn {
  display: flex;
  align-items: center;
  gap: 2px;
}

.divider {
  width: 1px;
  height: 16px;
  background: #c9c5b4;
}

.tree {
  flex: 1;
  min-height: 0;
  overflow: hidden;
}

.tree li {
  display: flex;
  align-items: center;
  height: 18px;
  padding-left: 4px;
}

.tree .level-1 {
  padding-left: 23px;
}

.tree .level-2 {
  padding-left: 41px;
}

.expander {
  width: 19px;
  height: 18px;
}

.node {
  display: flex;
  align-items: center;
  gap: 4px;
  height: 18px;
}

.selected .node {
  padding-right: 4px;
  background: #d9d9d9;
}

/* Scroll bars */
.scrollbar {
  display: flex;
  flex: none;
  background: #f0f0f0;
  color: #555;
}

.scrollbar button {
  display: flex;
  align-items: center;
  justify-content: center;
  width: 17px;
  height: 17px;
}

.scrollbar .track {
  flex: 1;
  min-height: 0;
}

.scrollbar .thumb {
  background: #cdcdcd;
}

.horizontal {
  height: 16px;
}

.horizontal .thumb {
  width: 72%;
  height: 100%;
}

.vertical {
  flex-direction: column;
  width: 16px;
}

.vertical .thumb {
  width: 100%;
  height: 86%;
}

.to-left svg {
  transform: rotate(-90deg);
}

.to-right svg {
  transform: rotate(90deg);
}

.to-bottom svg {
  transform: rotate(180deg);
}

/* Center */
.center {
  display: flex;
  flex-direction: column;
  min-width: 0;
  min-height: 0;
}

.home {
  flex: 1;
  padding: 0 12px 12px;
}

.home-title {
  display: flex;
  align-items: center;
  gap: 18px;
  flex: none;
  height: 52px;
  font-size: 19px;
  font-weight: 400;
}

.feature-box {
  display: flex;
  flex-direction: column;
  flex: 1;
  min-height: 0;
  border: 1px solid #dfdfdf;
}

.filter-bar {
  display: flex;
  align-items: center;
  flex: none;
  height: 29px;
  padding-left: 7px;
  border-bottom: 1px solid #4c4d6f;
  background: linear-gradient(#fbfbfb, #e0dedf);
}

.combo {
  position: relative;
  flex: 1;
  height: 23px;
  margin: 0 3px 0 4px;
}

.combo select {
  width: 100%;
  height: 100%;
  border: 0;
  background: #fff;
  appearance: none;
  font: inherit;
}

.combo svg {
  position: absolute;
  top: 11px;
  right: 4px;
}

.go,
.show-all {
  display: flex;
  align-items: center;
  gap: 3px;
}

.go {
  color: #8d8d8d;
}

.go .dropdown {
  margin: 0 5px 0 7px;
}

.overflow {
  display: flex;
  align-items: flex-end;
  justify-content: center;
  width: 11px;
  height: 28px;
  margin-left: 12px;
  padding-bottom: 3px;
  background: linear-gradient(#f0f0ea, #8d8b78);
}

.overflow svg {
  width: 6px;
  height: 7px;
}

.feature-scroll {
  display: flex;
  flex: 1;
  min-height: 0;
}

.feature-list {
  flex: 1;
  min-width: 0;
  overflow: hidden;
}

.group {
  margin-bottom: 1px;
}

.group h3 {
  display: flex;
  align-items: center;
  gap: 6px;
  height: 20px;
  padding: 0 9px 0 12px;
  color: #1e3287;
  font-weight: 400;
}

.group h3 i {
  flex: 1;
  height: 1px;
  margin-right: 2px;
  background: #b3c5de;
}

.group h3 .chevron {
  color: #003399;
}

.grid {
  display: grid;
  grid-template-columns: repeat(auto-fill, 73px);
  grid-auto-rows: 68px;
  gap: 7px 2px;
  padding: 2px 0 7px;
}

.feature {
  position: relative;
  display: flex;
  flex-direction: column;
  align-items: center;
  border: 1px solid transparent;
  line-height: 15px;
}

.feature .icon32 {
  margin-bottom: 3px;
}

.feature.active {
  border: 1px dotted #222;
  background: #cce8ff;
}

/* Caption printed on the icon itself */
.badge {
  position: absolute;
  top: 18px;
  left: 28px;
  width: 22px;
  font-size: 8px;
  font-weight: 700;
  line-height: 12px;
  text-align: center;
}

/* Pen mark drawn over the cell */
.mark {
  position: absolute;
  top: -13px;
  left: 47px;
  z-index: 1;
  width: 56px;
  height: 36px;
  fill: none;
  stroke: #f5141b;
  stroke-width: 2;
}

.view-tabs {
  display: flex;
  align-items: center;
  flex: none;
  gap: 2px;
  height: 26px;
  padding-left: 6px;
}

.view-tabs button {
  display: flex;
  align-items: center;
  gap: 3px;
  height: 20px;
  padding-right: 6px;
}

.view-tabs .active {
  padding: 0 6px 0 1px;
  border: 1px solid #0078d7;
  background: #fff;
}

/* Actions */
.actions {
  background: linear-gradient(90deg, #fdfdfd, #e9e9e9);
}

.action-list {
  padding: 4px 3px 0 0;
}

.action-list hr {
  height: 1px;
  margin: 2px 0 2px 3px;
  border: 0;
  background: linear-gradient(90deg, #e2e2e2, #8c8c8c 40%);
}

.action {
  display: flex;
  align-items: center;
  height: 20px;
  color: #3a96d2;
}

.action-icon {
  width: 29px;
  padding-left: 5px;
}

.disabled {
  color: #9b9b9b;
}

h4 {
  height: 20px;
  padding-left: 29px;
  line-height: 20px;
}

.section-title {
  display: flex;
  align-items: center;
  justify-content: space-between;
  height: 24px;
  margin-bottom: 1px;
  padding: 0 9px 0 7px;
  background: linear-gradient(#dfdddf, #f7f7f7);
}

.section-title button {
  display: flex;
  align-items: center;
  justify-content: center;
  width: 16px;
  height: 16px;
  border: 1px solid #858585;
  border-radius: 50%;
  background: linear-gradient(#fff, #dcdcdc);
}

.section-title .chevron {
  width: 8px;
  height: 8px;
}

/* Status bar */
.statusbar {
  display: flex;
  align-items: center;
  flex: none;
  height: 23px;
  padding: 0 1px 0 5px;
  border-top: 1px solid #fff;
  background: linear-gradient(90deg, #e2e0e1, #f9f9f9);
}

.statusbar span {
  flex: 1;
}

.grip {
  align-self: flex-end;
  width: 12px;
  height: 12px;
  fill: #a0a0a0;
}
</style>
